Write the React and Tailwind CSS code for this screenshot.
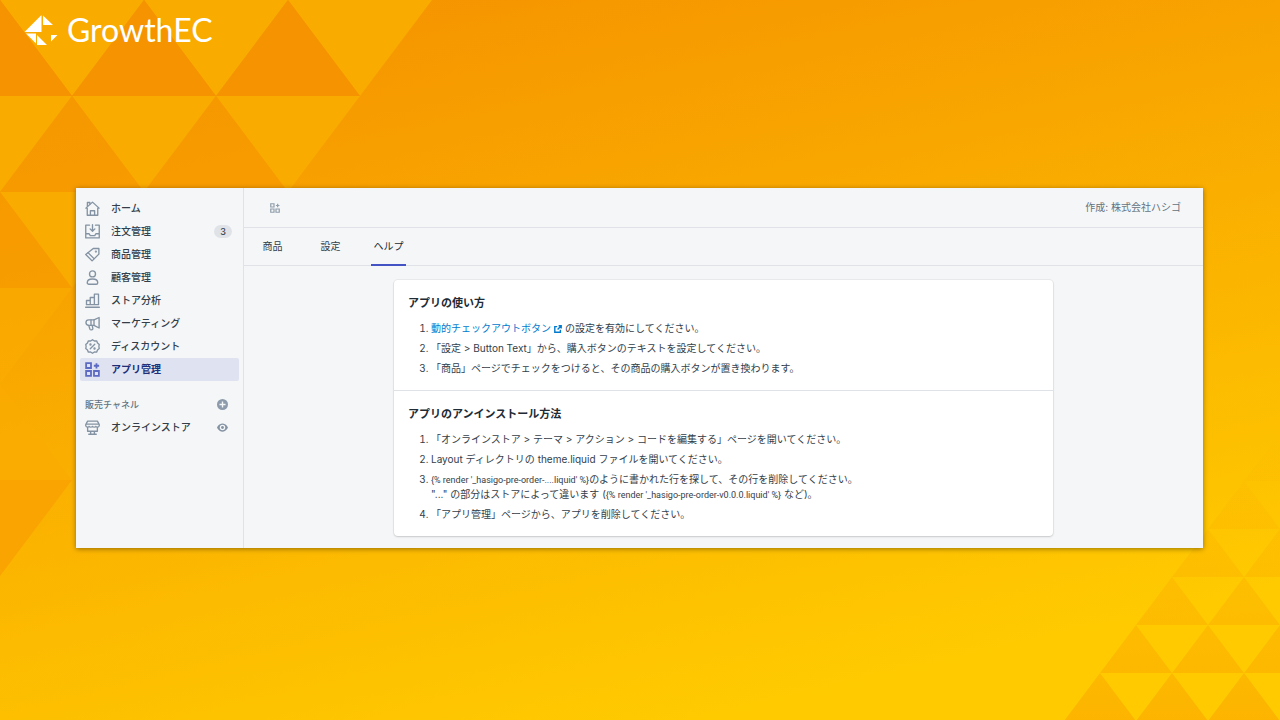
import React, { useState } from 'react';

const Icon = ({ className, children }) => (
  <svg
    viewBox="0 0 20 20"
    fill="none"
    stroke="currentColor"
    strokeWidth="1.8"
    strokeLinejoin="round"
    strokeLinecap="round"
    className={className}
    aria-hidden="true"
  >
    {children}
  </svg>
);

const HomeIcon = (props) => (
  <Icon {...props}>
    <path d="M3 19V9.5H1.2L10 1.5l8.8 8H17V19z" />
    <path d="M7.2 19v-6h5.6v6M3.2 7V2h3.3v2.2" />
  </Icon>
);

const OrdersIcon = (props) => (
  <Icon {...props}>
    <path d="M6 1.5H1v17h18v-17h-5M1 13h4.5l1.5 2.5h6l1.5-2.5H19" />
    <path d="M10 1v8.500M6.800 6.500 10 9.700l3.200-3.200" />
  </Icon>
);

const ProductsIcon = (props) => (
  <Icon {...props}>
    <path d="M11 2h7.500v7.500L9.500 18.500 1 10z" />
    <path d="M4 7.500 12 15.500" />
    <circle cx="14.500" cy="6" r="0.600" />
  </Icon>
);

const CustomersIcon = (props) => (
  <Icon {...props}>
    <circle cx="10" cy="5.200" r="4" />
    <path d="M3 17c0-3 2.500-5 7-5s7 2 7 5c0 1.300-1 2-2 2H5c-1 0-2-.700-2-2z" />
  </Icon>
);

const AnalyticsIcon = (props) => (
  <Icon {...props}>
    <path d="M2 15.500V10h5v5.500M7 15.500V6h5.500v9.500M12.500 15.500V1.500H18v14M2 15.500h16M.800 19h18.400" />
  </Icon>
);

const MarketingIcon = (props) => (
  <Icon {...props}>
    <path d="M18.800 2v14L12 12.500H5a3.700 3.700 0 0 1 0-7.400h7L18.800 2z" />
    <path d="M12 5v7.500M8 5.200v7.300M5 12.500l1.500 5c.500 1.500 4 1.500 4-.500l-.800-4.300" />
  </Icon>
);

const DiscountsIcon = (props) => (
  <Icon {...props}>
    <path d="m10 1 2.500 1.700 3-.200 1.200 2.800 2.300 2L18.500 10l.500 2.700-2.300 2-1.200 2.800-3-.200L10 19l-2.500-1.700-3 .200-1.200-2.800-2.300-2 .500-2.700L1 7.300l2.300-2 1.200-2.800 3 .200z" />
    <path d="m7 13 6-6" />
    <circle cx="7.300" cy="7.300" r="0.700" />
    <circle cx="12.700" cy="12.700" r="0.700" />
  </Icon>
);

const AppsIcon = ({ className }) => (
  <svg
    viewBox="0 0 20 20"
    fill="none"
    stroke="currentColor"
    strokeWidth="2.4"
    className={className}
    aria-hidden="true"
  >
    <path d="M1.500 1.500h6.500v6.500H1.500zM1.500 12h6.500v6.500H1.500zM12 12h6.500v6.500H12zM15.300 1.500v7M11.800 5h7" />
  </svg>
);

const StoreIcon = (props) => (
  <Icon {...props}>
    <path d="M3.500 1.500h13L19 6v1.500a2.500 2.500 0 0 1-4.500 1 3 3 0 0 1-4.500 0 3 3 0 0 1-4.500 0A2.500 2.500 0 0 1 1 7.500V6zM1.500 5.500h17" />
    <path d="M3.500 10v5h13v-5M7.500 15v3.500M12.500 15v3.500M5 19h10" />
  </Icon>
);

const PlusIcon = ({ className }) => (
  <svg viewBox="0 0 20 20" className={className} aria-hidden="true">
    <circle cx="10" cy="10" r="10" fill="currentColor" />
    <path d="M10 4.500v11M4.500 10h11" stroke="#f4f6f8" strokeWidth="2.500" />
  </svg>
);

const EyeIcon = ({ className }) => (
  <svg viewBox="0 0 20 20" className={className} aria-hidden="true">
    <path
      fill="currentColor"
      fillRule="evenodd"
      d="M10 2.500c7 0 10 7.500 10 7.500s-3 7.500-10 7.500S0 10 0 10s3-7.500 10-7.500zM10 5a5 5 0 1 0 0 10 5 5 0 0 0 0-10z"
    />
    <circle cx="10" cy="10" r="2.600" fill="currentColor" />
  </svg>
);

const ExternalIcon = ({ className }) => (
  <svg
    viewBox="0 0 20 20"
    fill="none"
    stroke="currentColor"
    strokeWidth="3.5"
    className={className}
    aria-hidden="true"
  >
    <path d="M8 4H2v14h14v-6M11.500 2H18v6.500M17.500 2.500 9 11" />
  </svg>
);

const navItems = [
  { id: 'home', label: 'ホーム', icon: HomeIcon },
  { id: 'orders', label: '注文管理', icon: OrdersIcon, badge: 3 },
  { id: 'products', label: '商品管理', icon: ProductsIcon },
  { id: 'customers', label: '顧客管理', icon: CustomersIcon },
  { id: 'analytics', label: 'ストア分析', icon: AnalyticsIcon },
  { id: 'marketing', label: 'マーケティング', icon: MarketingIcon },
  { id: 'discounts', label: 'ディスカウント', icon: DiscountsIcon },
  { id: 'apps', label: 'アプリ管理', icon: AppsIcon },
];

const tabs = [
  { id: 'products', label: '商品' },
  { id: 'settings', label: '設定' },
  { id: 'help', label: 'ヘルプ' },
];

const Backdrop = () => (
  <div className="absolute inset-0 overflow-hidden" aria-hidden="true">
    <svg className="absolute left-0 top-0" width="432" height="576" viewBox="0 0 432 576">
      <path
        fill="#faab00"
        d="M0 0h144L72 96zM144 0h144l-72 96zM288 0h144l-72 96zM0 96h72L0 192zM72 96h144l-72 96zM216 96h144l-72 96zM0 192h144L72 288zM144 192h144l-72 96z"
      />
      <path fill="#faab00" fillOpacity="0.6" d="M0 288h72L0 384zM0 384l72 96H0z" />
      <path
        fill="#f59400"
        d="M0 0l72 96H0zM144 0l72 96H72zM288 0l72 96H216z"
      />
      <path
        fill="#f79a00"
        fillOpacity="0.6"
        d="M72 96l72 96H0zM216 96l72 96H144zM0 192l72 96H0z"
      />
      <path fill="#f9a400" d="M0 480h72L0 576z" />
    </svg>
    <svg className="absolute bottom-0 right-0" width="216" height="288" viewBox="1064 432 216 288">
      <defs>
        <linearGradient id="fade" gradientUnits="userSpaceOnUse" x1="0" y1="432" x2="0" y2="720">
          <stop offset="0" stopColor="#fba800" stopOpacity="0" />
          <stop offset="1" stopColor="#fba800" stopOpacity="0.65" />
        </linearGradient>
      </defs>
      <path
        fill="url(#fade)"
        d="M1100 673l36 48h-72zM1172 673l36 48h-72zM1244 673l36 48h-72zM1136 625l36 48h-72zM1208 625l36 48h-72zM1280 625v48h-36zM1172 577l36 48h-72zM1244 577l36 48h-72zM1208 529l36 48h-72zM1280 529v48h-36zM1244 481l36 48h-72zM1280 433v48h-36z"
      />
    </svg>
  </div>
);

const Logo = () => (
  <div className="flex items-center gap-2 text-white">
    <svg width="35" height="32" viewBox="24 14 35 32" fill="currentColor" aria-hidden="true">
      <path d="M41.500 15v17H24.500zM43 15.500 53 25H43zM26 33.500h10v10zM37 35l10 10H37zM51 35h6.500L51 41.500z" />
    </svg>
    <span className="font-[Lato] text-[32px] leading-8">GrowthEC</span>
  </div>
);

const Sidebar = () => {
  const [activeItem, setActiveItem] = useState('apps');

  return (
    <aside className="w-[168px] shrink-0 border-r border-[#dfe3e8] px-1 pt-[9px]">
      <nav>
        {navItems.map((item) => (
          <a
            key={item.id}
            href={`#${item.id}`}
            onClick={() => setActiveItem(item.id)}
            className={`flex h-[23px] items-center gap-[11px] rounded-xs px-[5px] ${
              activeItem === item.id
                ? 'bg-[#dfe3f1] font-bold text-[#202e78]'
                : 'font-medium text-[#333e49]'
            }`}
          >
            <item.icon
              className={`size-[15px] ${activeItem === item.id ? 'text-[#5c6ac4]' : 'text-[#8493a3]'}`}
            />
            <span className="flex-1">{item.label}</span>
            {item.badge && (
              <span className="mr-0.5 rounded-full bg-[#dfe3e8] px-[6px] text-[9px] leading-[13px]">
                {item.badge}
              </span>
            )}
          </a>
        ))}
      </nav>

      <div className="mt-3 flex h-[23px] items-center justify-between pl-[5px] pr-[11px]">
        <h2 className="text-[9px] font-medium text-[#637381]">販売チャネル</h2>
        <button aria-label="販売チャネルを追加" className="text-[#8c9aab]">
          <PlusIcon className="size-[11px]" />
        </button>
      </div>
      <div className="flex h-[23px] items-center justify-between pl-[5px] pr-[11px]">
        <a href="#online-store" className="flex items-center gap-[11px] font-medium text-[#333e49]">
          <StoreIcon className="size-[15px] text-[#8493a3]" />
          オンラインストア
        </a>
        <button aria-label="ストアを表示" className="text-[#8493a3]">
          <EyeIcon className="size-[11px]" />
        </button>
      </div>
    </aside>
  );
};

const HelpSection = ({ title, children }) => (
  <section className="px-[14px] pb-[14px] pt-[15px]">
    <h2 className="mb-[10px] text-[11px] font-bold leading-4 text-[#212b36]">{title}</h2>
    <ol className="flex list-decimal flex-col gap-[5px] pl-[23px] leading-[15px]">{children}</ol>
  </section>
);

const Code = ({ children }) => (
  <code className="font-[Roboto] text-[9px] leading-none">{children}</code>
);

const App = () => {
  const [activeTab, setActiveTab] = useState('help');

  return (
    <div className="relative min-h-screen bg-[linear-gradient(167deg,#f59200_5%,#ffcb00_88%)] font-[Inter,'Noto_Sans_CJK_JP',sans-serif]">
      <Backdrop />

      <div className="relative">
        <header className="px-6 pt-[14px]">
          <Logo />
        </header>

        <div className="ml-[76px] mr-[77px] mt-[142px] flex bg-[#f4f6f8] text-[10px] leading-[15px] text-[#333e49] shadow-[0_1px_5px_rgba(0,0,0,0.4)]">
          <Sidebar />

          <main className="min-w-0 flex-1">
            <div className="flex h-10 items-center justify-between border-b border-[#dfe3e8] pl-[26px] pr-[22px] text-[#637381]">
              <AppsIcon className="size-[10px] text-[#919eab]" />
              <span>作成: 株式会社ハシゴ</span>
            </div>

            <div role="tablist" className="flex h-[38px] gap-[23px] border-b border-[#dfe3e8] pl-[11px]">
              {tabs.map((tab) => (
                <button
                  key={tab.id}
                  role="tab"
                  aria-selected={activeTab === tab.id}
                  onClick={() => setActiveTab(tab.id)}
                  className={`-mb-px min-w-[35px] border-b-2 text-center ${
                    activeTab === tab.id
                      ? 'border-[#4353c4] text-[#212b36]'
                      : 'border-transparent'
                  }`}
                >
                  {tab.label}
                </button>
              ))}
            </div>

            <div className="px-4 pb-3 pt-[14px]">
              <div className="mx-auto max-w-[659px] divide-y divide-[#dfe3e8] rounded-sm bg-white shadow-[0_0_0_1px_rgba(63,63,68,0.06),0_1px_2px_rgba(63,63,68,0.2)]">
                <HelpSection title="アプリの使い方">
                  <li>
                    <a href="#checkout-button" className="text-[#007ace]">
                      動的チェックアウトボタン
                      <ExternalIcon className="mx-[3px] inline size-2 align-[-1px]" />
                    </a>
                    の設定を有効にしてください。
                  </li>
                  <li>「設定 &gt; Button Text」から、購入ボタンのテキストを設定してください。</li>
                  <li>「商品」ページでチェックをつけると、その商品の購入ボタンが置き換わります。</li>
                </HelpSection>

                <HelpSection title="アプリのアンインストール方法">
                  <li>「オンラインストア &gt; テーマ &gt; アクション &gt; コードを編集する」ページを開いてください。</li>
                  <li>Layout ディレクトリの theme.liquid ファイルを開いてください。</li>
                  <li>
                    <Code>{"{% render '_hasigo-pre-order-....liquid' %}"}</Code>
                    のように書かれた行を探して、その行を削除してください。
                    <br />
                    "..." の部分はストアによって違います (
                    <Code>{"{% render '_hasigo-pre-order-v0.0.0.liquid' %}"}</Code> など)。
                  </li>
                  <li>「アプリ管理」ページから、アプリを削除してください。</li>
                </HelpSection>
              </div>
            </div>
          </main>
        </div>
      </div>
    </div>
  );
};

export default App;
